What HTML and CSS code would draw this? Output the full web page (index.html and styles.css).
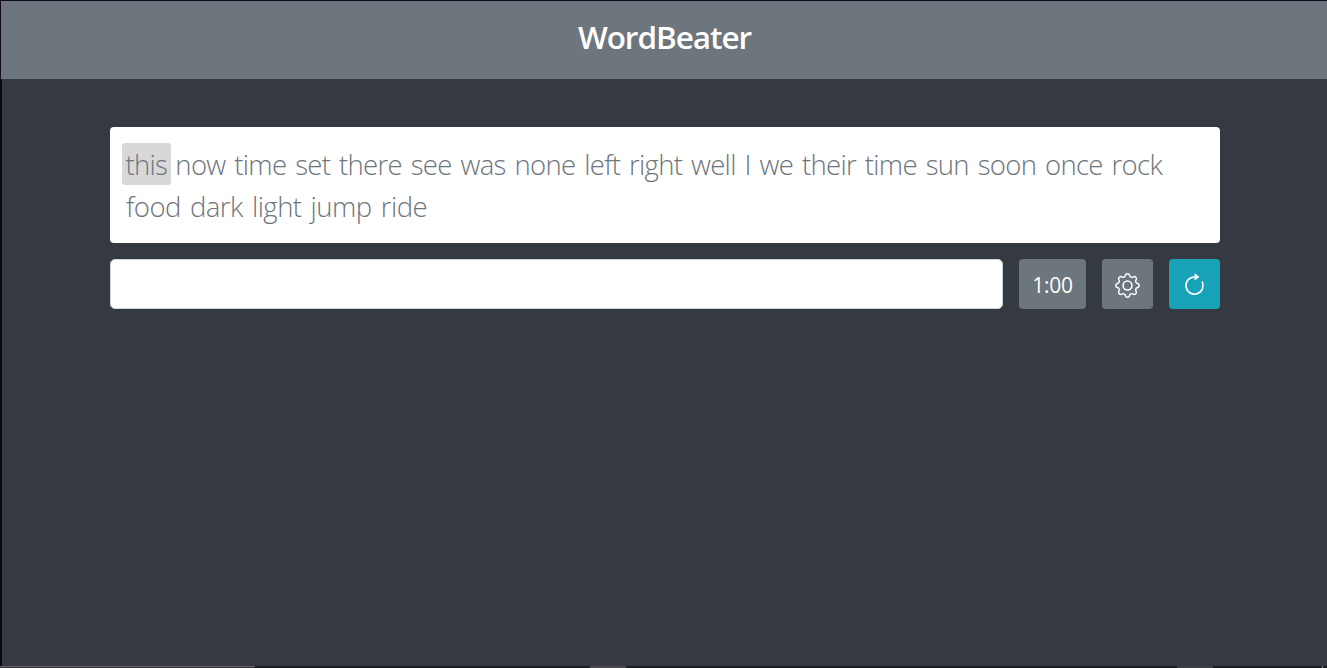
FILE: index.html
```html
<!DOCTYPE html>
<html lang="en">
<head>
<meta charset="utf-8">
<title>WordBeater</title>
<link rel="stylesheet" href="styles.css">
</head>
<body>
<div class="window">
  <header class="header"><h1 class="title">WordBeater</h1></header>
  <main class="main">
    <div class="words"><div class="line"><span class="current">this</span> now time set there see was none left right well I we their time sun soon once rock</div><div class="line second">food dark light jump ride</div></div>
    <div class="controls">
      <input class="entry" type="text" aria-label="Type here">
      <div class="btn timer"><span class="time">1:00</span></div>
      <button class="btn square" aria-label="Settings">
        <svg class="icon" viewBox="0 0 16 16" fill="none" stroke="currentColor"><path transform="translate(.5 .5) scale(.9375)" d="M9.405 1.05c-.413-1.4-2.397-1.4-2.81 0l-.1.34a1.464 1.464 0 0 1-2.105.872l-.31-.17c-1.283-.698-2.686.705-1.987 1.987l.169.311c.446.82.023 1.841-.872 2.105l-.34.1c-1.4.413-1.4 2.397 0 2.81l.34.1a1.464 1.464 0 0 1 .872 2.105l-.17.31c-.698 1.283.705 2.686 1.987 1.987l.311-.169a1.464 1.464 0 0 1 2.105.872l.1.34c.413 1.4 2.397 1.4 2.81 0l.1-.34a1.464 1.464 0 0 1 2.105-.872l.31.17c1.283.698 2.686-.705 1.987-1.987l-.169-.311a1.464 1.464 0 0 1 .872-2.105l.34-.1c1.4-.413 1.4-2.397 0-2.81l-.34-.1a1.464 1.464 0 0 1-.872-2.105l.17-.31c.698-1.283-.705-2.686-1.987-1.987l-.311.169a1.464 1.464 0 0 1-2.105-.872z"/><circle cx="8" cy="8" r="2.85"/></svg>
      </button>
      <button class="btn square reload" aria-label="Restart">
        <svg class="icon" viewBox="0 0 16 16" fill="currentColor"><path d="M8 3a5 5 0 1 0 4.546 2.914.5.5 0 0 1 .908-.417A6 6 0 1 1 8 2z"/><path d="M8 4.466V.534a.25.25 0 0 1 .41-.192l2.36 1.966c.12.1.12.284 0 .384L8.41 4.658A.25.25 0 0 1 8 4.466z"/></svg>
      </button>
    </div>
  </main>
  <footer class="edge"><i class="tab first"></i><i class="tab middle"></i><i class="tab last"></i><i class="tick"></i></footer>
</div>
</body>
</html>
```
FILE: styles.css
```css
* { box-sizing: border-box; }
body { margin: 0; background: #353941; overflow: hidden; }
.window { height: 668px; display: flex; flex-direction: column; border-top: 1px solid #120a20; }
.header { height: 78px; flex: none; border-left: 1px solid #120a20; box-shadow: inset 1px 0 #8560b8; background: #6d757d; padding: 12px 0 0 1px; }
.title { margin: 0; font: 600 31.5px/48px "Open Sans", sans-serif; letter-spacing: -1.05px; text-align: center; color: #fff; }
.main { flex: 1; border-left: 2px solid #07080f; padding: 48px 107px 0 108px; }
.words { height: 116px; background: #fff; border-radius: 4px; padding: 16px 12px; color: #6d757d; }
.line { height: 42px; font: 300 27.5px/44px "Open Sans", sans-serif; letter-spacing: -.7px; word-spacing: 2.4px; white-space: nowrap; }
.second { padding-left: 4px; letter-spacing: -.5px; }
.current { display: inline-block; width: 49px; height: 42px; padding-left: 3.5px; margin-right: -4.5px; background: #d8d8d8; border-radius: 3px; vertical-align: top; }
.controls { display: flex; gap: 16px; margin-top: 16px; }
.entry { flex: 1; min-width: 0; height: 50px; border: 1px solid #ced4da; border-radius: 5px; background: #fff; outline: 0; }
.btn { display: flex; align-items: center; justify-content: center; height: 50px; border: 0; border-radius: 4px; padding: 0; background: #6d757d; color: #fff; }
.timer { width: 67px; font: 400 21px/30px "Open Sans", sans-serif; letter-spacing: -.3px; padding-top: 2px; }
.square { width: 51px; }
.reload { background: #18a2b8; }
.icon { width: 25px; height: 25px; display: block; overflow: visible; position: relative; top: 1px; }
.edge { height: 2px; flex: none; display: flex; background: #1c1e20; }
.tab { height: 2px; background: #4b4b4b; }
.first { width: 255px; background: #373737; border-top: 1px solid #656565; }
.middle { width: 36px; margin-left: 335px; }
.last { width: 36px; margin-left: 551px; background: #3d3e3f; }
.tick { width: 1px; margin-left: 109px; background: #888; }
```
